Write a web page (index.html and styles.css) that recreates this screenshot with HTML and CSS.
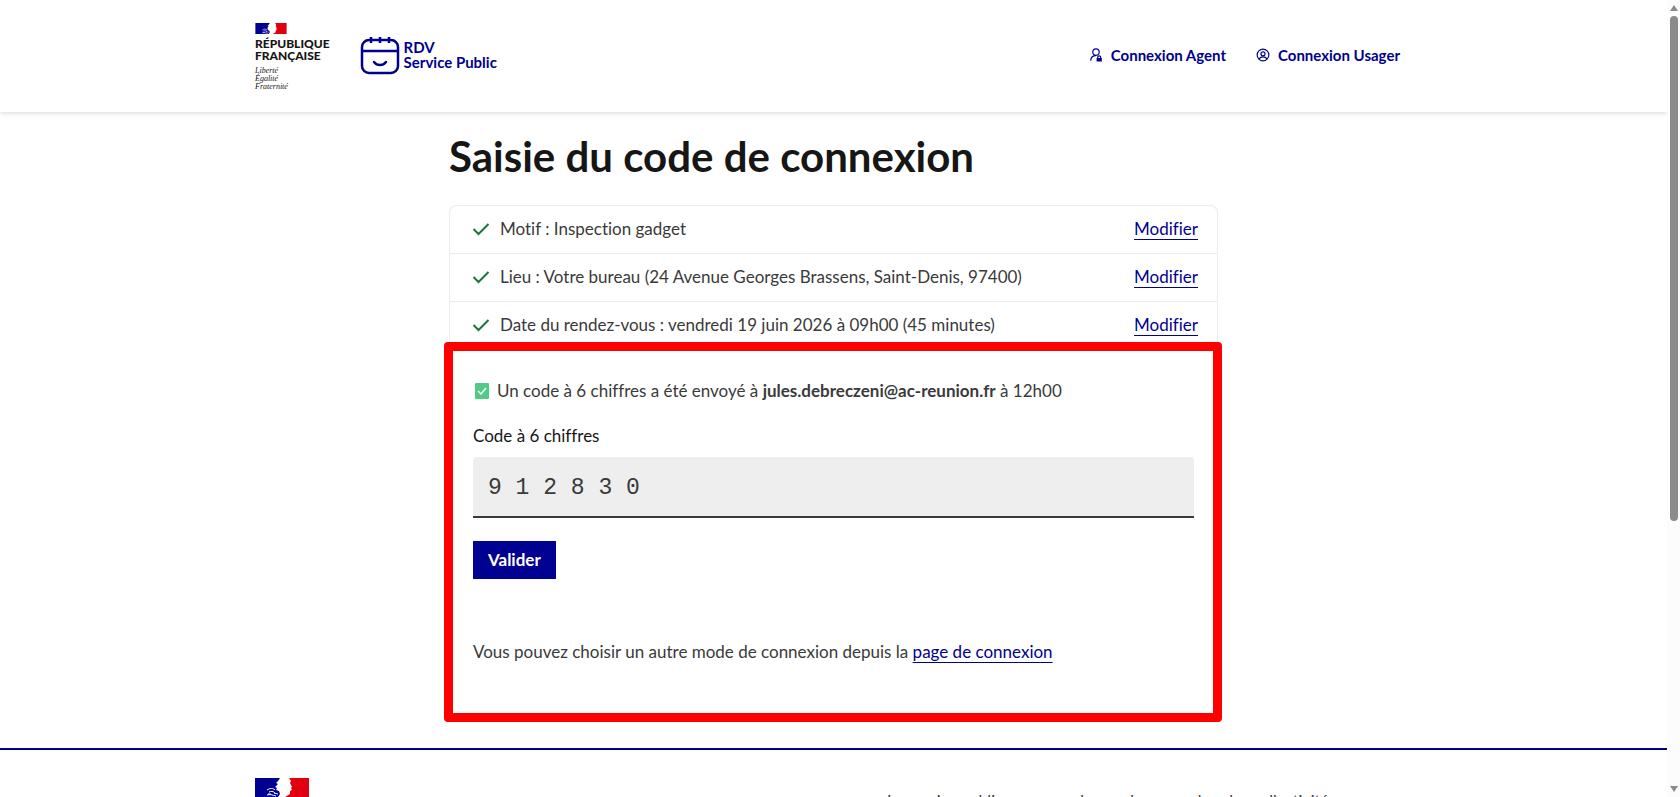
FILE: index.html
```html
<!DOCTYPE html>
<html lang="fr">
<head>
<meta charset="utf-8">
<title>Saisie du code de connexion - RDV Service Public</title>
<link rel="stylesheet" href="styles.css">
</head>
<body>
<svg class="sprite" aria-hidden="true">
  <symbol id="flag" viewBox="0 0 54 19">
    <path fill="#000091" d="M0 0h25l-2 3-2 2 2 1-3 3 2 1-1 2 3 1 1 3-2 3H0z"/>
    <path fill="#e1000f" d="M34 0h20v19H30l5-3v-3l2-1-1-2 1-1-2-4 1-2z"/>
    <path fill="none" stroke="#fff" stroke-width="1" d="M12 12c3-2 6-2 8 0m-6 2c2-1 4-1 6 1m-7 1h3m-4 1c3-1 5 0 9 1m-2-3 4 1"/>
  </symbol>
  <symbol id="check" viewBox="0 0 24 24">
    <path fill="none" stroke="#18753c" stroke-width="2.400" d="m3 12 6 6L21 6"/>
  </symbol>
</svg>
<div class="window">
  <div class="page">
    <header class="header">
      <div class="container header-body">
        <div class="brand">
          <div class="state">
            <svg class="state-flag" aria-hidden="true"><use href="#flag"/></svg>
            <p class="state-name">RÉPUBLIQUE<br>FRANÇAISE</p>
            <p class="state-motto">Liberté<br>Égalité<br>Fraternité</p>
          </div>
          <a class="service" href="#">
            <svg class="service-icon" viewBox="0 0 40 40" fill="none" stroke="#000091" stroke-width="2.500" aria-hidden="true">
              <rect x="2" y="5" width="36" height="33" rx="7"/>
              <path d="M2 16h36M11 2v6M20 2v6M29 2v6"/>
              <path stroke-linecap="round" d="M14 27c3 4 9 4 12 0"/>
            </svg>
            <span>RDV<br>Service Public</span>
          </a>
        </div>
        <nav class="tools" aria-label="Connexion">
          <a class="tool" href="#">
            <svg class="tool-icon" viewBox="0 0 24 24" fill="none" stroke="currentColor" stroke-width="2" aria-hidden="true">
              <circle cx="12" cy="7" r="5.500"/><path d="M3 22c0-5 3-9 9-9"/>
              <path fill="currentColor" stroke="none" d="M13 17h1v-1a3.500 3.500 0 0 1 7 0v1h1v6h-9zm3 0h3v-1a1.500 1.500 0 0 0-3 0z"/>
            </svg>Connexion Agent</a>
          <a class="tool" href="#">
            <svg class="tool-icon" viewBox="0 0 24 24" fill="none" stroke="currentColor" stroke-width="2" aria-hidden="true">
              <circle cx="12" cy="12" r="10"/><circle cx="12" cy="10" r="3.500"/><path d="M5 19c3-5 11-5 14 0"/>
            </svg>Connexion Usager</a>
        </nav>
      </div>
    </header>
    <main class="main">
      <h1 class="title">Saisie du code de connexion</h1>
      <ul class="steps">
        <li class="step"><svg class="step-check" aria-hidden="true"><use href="#check"/></svg><span class="step-text">Motif : Inspection gadget</span><a class="link" href="#">Modifier</a></li>
        <li class="step"><svg class="step-check" aria-hidden="true"><use href="#check"/></svg><span class="step-text">Lieu : Votre bureau (24 Avenue Georges Brassens, Saint-Denis, 97400)</span><a class="link" href="#">Modifier</a></li>
        <li class="step"><svg class="step-check" aria-hidden="true"><use href="#check"/></svg><span class="step-text">Date du rendez-vous : vendredi 19 juin 2026 à 09h00 (45 minutes)</span><a class="link" href="#">Modifier</a></li>
      </ul>
      <form class="panel">
        <p class="notice">
          <svg class="notice-icon" viewBox="0 0 14 16" aria-hidden="true"><rect width="14" height="16" rx="1" fill="#4fcb86"/><path d="m3 8 3 3 5-6" fill="none" stroke="#fff" stroke-width="1.500"/></svg>
          <span>Un code à 6 chiffres a été envoyé à <strong>jules.debreczeni@ac-reunion.fr</strong> à 12h00</span>
        </p>
        <label class="label" for="code">Code à 6 chiffres</label>
        <input class="input" id="code" type="text" inputmode="numeric" value="9 1 2 8 3 0">
        <button class="button" type="button">Valider</button>
        <p class="alternative">Vous pouvez choisir un autre mode de connexion depuis la <a class="link" href="#">page de connexion</a></p>
      </form>
    </main>
    <footer class="footer">
      <div class="container footer-body">
        <svg class="footer-flag" aria-hidden="true"><use href="#flag"/></svg>
        <p class="footer-text">Le service public pour prendre rendez-vous dans les collectivités</p>
      </div>
    </footer>
  </div>
  <div class="scrollbar" aria-hidden="true">
    <svg class="arrow" viewBox="0 0 8 6"><path d="M4 0 8 6H0z"/></svg>
    <div class="track"><div class="thumb"></div></div>
    <svg class="arrow" viewBox="0 0 8 6"><path d="M0 0h8L4 6z"/></svg>
  </div>
</div>
</body>
</html>
```
FILE: styles.css
```css
* { box-sizing: border-box; }
body, p, h1, ul { margin: 0; padding: 0; }
body {
  background: #fff;
  color: #3a3a3a;
  font: 17px/24px Lato, "Noto Sans", sans-serif;
  font-variant-ligatures: none;
}
a { color: #000091; text-decoration: none; }
svg { display: block; flex: none; }
.sprite { display: none; }
.window { display: flex; height: 100vh; overflow: hidden; }
.page { flex: 1; min-width: 0; }
.container { max-width: 1157px; margin: 0 auto; }

.header { padding: 23px 0 21px; box-shadow: 0 1px 5px rgba(0, 0, 18, .16); }
.header-body, .brand, .service, .tools, .tool { display: flex; align-items: center; }
.header-body { justify-content: space-between; align-items: flex-start; }
.brand { gap: 30px; align-items: flex-start; }
.state-flag { width: 32px; height: 11px; }
.state-name { margin-top: 4px; color: #161616; font-size: 12px; line-height: 12px; font-weight: 900; }
.state-motto { margin-top: 5px; color: #161616; font: italic 8px/8px "Liberation Serif", serif; }
.service { gap: 4px; padding-top: 12px; font-size: 15px; line-height: 15px; font-weight: 700; }
.service-icon { width: 40px; height: 40px; }
.tools { gap: 30px; padding: 20px 12px 0 0; }
.tool { gap: 8px; font-size: 15px; line-height: 24px; font-weight: 700; }
.tool-icon { width: 14px; height: 14px; }

.main { max-width: 769px; margin: 0 auto; padding-top: 20px; }
.title { color: #161616; font-size: 42px; line-height: 48px; font-weight: 700; }
.steps { margin-top: 25px; border: 1px solid #e8edf3; border-bottom: 0; border-radius: 8px 8px 0 0; list-style: none; }
.step { display: flex; align-items: center; padding: 11px 19px 12px 21px; border-bottom: 1px solid #e8edf3; }
.step:last-child { padding-bottom: 5px; border-bottom: 0; }
.step-check { width: 20px; height: 20px; }
.step-text { flex: 1; padding-left: 9px; }
.link { text-decoration: underline; text-decoration-thickness: 1px; text-underline-offset: 4px; text-decoration-skip-ink: none; }

.panel { margin: 0 -4px 0 -5px; padding: 28px 19px 49px 20px; border: 9px solid #f00; border-radius: 4px; }
.notice { display: flex; align-items: center; gap: 8px; padding-left: 2px; }
.notice-icon { width: 14px; height: 16px; }
.label { display: block; margin-top: 21px; color: #161616; }
.input {
  display: block; width: 100%; height: 61px; margin-top: 9px; padding: 2px 15px 0;
  border: 0; border-bottom: 2px solid #3a3a3a; border-radius: 4px 4px 0 0; background: #eee; color: #3a3a3a;
  font-family: "Liberation Mono", monospace; font-size: 23px;
}
.button { display: block; margin-top: 23px; padding: 7px 15px; border: 0; background: #000091; color: #fff; font: inherit; font-weight: 700; }
.alternative { margin-top: 61px; }

.footer { margin-top: 26px; border-top: 2px solid #000091; }
.footer-body { display: flex; justify-content: space-between; padding-top: 28px; }
.footer-flag { width: 54px; height: 19px; }
.footer-text { width: 540px; padding: 12px 0 0 15px; font-size: 16px; line-height: 20px; }

.scrollbar { display: flex; flex-direction: column; align-items: center; width: 13px; padding: 5px 0; background: #fcfcfc; }
.arrow { width: 8px; height: 6px; fill: #8b8b8b; }
.track { flex: 1; width: 8px; padding: 5px 0; }
.thumb { height: 66%; border-radius: 4px; background: #8b8b8b; }
```
